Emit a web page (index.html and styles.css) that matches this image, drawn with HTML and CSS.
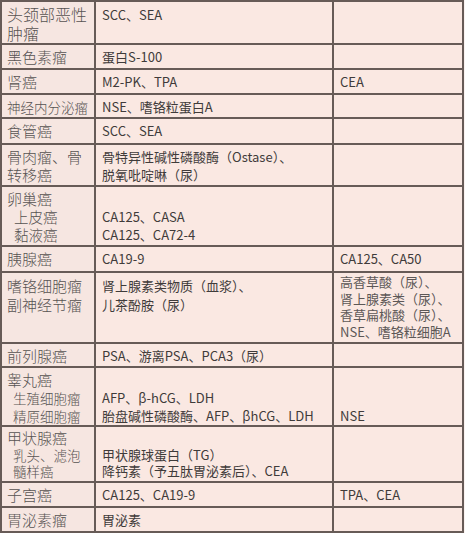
FILE: index.html
```html
<!DOCTYPE html>
<html lang="zh-CN">
<head>
<meta charset="utf-8">
<link rel="stylesheet" href="styles.css">
</head>
<body>
<table class="markers">
  <colgroup><col class="c1"><col class="c2"><col class="c3"></colgroup>
  <tbody>
    <tr class="h42 lh19"><td class="name big">头颈部恶性<br>肿瘤</td><td>SCC、SEA</td><td></td></tr>
    <tr class="h25"><td class="name">黑色素瘤</td><td>蛋白S-100</td><td></td></tr>
    <tr class="h25"><td class="name">肾癌</td><td>M2-PK、TPA</td><td>CEA</td></tr>
    <tr class="h24"><td class="name small">神经内分泌瘤</td><td>NSE、嗜铬粒蛋白A</td><td></td></tr>
    <tr class="h26"><td class="name">食管癌</td><td>SCC、SEA</td><td></td></tr>
    <tr class="h42"><td class="name">骨肉瘤、骨<br>转移癌</td><td>骨特异性碱性磷酸酶（Ostase）、<br>脱氧吡啶啉（尿）</td><td></td></tr>
    <tr class="h60"><td class="name">卵巢癌<span class="sub">上皮癌</span><span class="sub">黏液癌</span></td><td><br>CA125、CASA<br>CA125、CA72-4</td><td></td></tr>
    <tr class="h26"><td class="name">胰腺癌</td><td>CA19-9</td><td>CA125、CA50</td></tr>
    <tr class="h71 lh19"><td class="name">嗜铬细胞瘤<br>副神经节瘤</td><td>肾上腺素类物质（血浆）、<br>儿茶酚胺（尿）</td><td class="tight">高香草酸（尿）、<br>肾上腺素类（尿）、<br>香草扁桃酸（尿）、<br>NSE、嗜铬粒细胞A</td></tr>
    <tr class="h24"><td class="name">前列腺癌</td><td>PSA、游离PSA、PCA3（尿）</td><td></td></tr>
    <tr class="h57"><td class="name">睾丸癌<span class="sub sm">生殖细胞瘤</span><span class="sub sm">精原细胞瘤</span></td><td><br>AFP、β-hCG、LDH<br>胎盘碱性磷酸酶、AFP、βhCG、LDH</td><td><br><br>NSE</td></tr>
    <tr class="h56 lh16"><td class="name">甲状腺癌<span class="sub sm">乳头、滤泡</span><span class="sub sm">髓样癌</span></td><td><br>甲状腺球蛋白（TG）<br>降钙素（予五肽胃泌素后）、CEA</td><td></td></tr>
    <tr class="h25"><td class="name">子宫癌</td><td>CA125、CA19-9</td><td>TPA、CEA</td></tr>
    <tr class="h25"><td class="name">胃泌素瘤</td><td>胃泌素</td><td></td></tr>
  </tbody>
</table>
</body>
</html>
```

FILE: styles.css
```css
html, body {
  margin: 0;
  padding: 0;
  background: #fbf3f0;
}

.markers {
  border-collapse: collapse;
  table-layout: fixed;
  width: 462px;
  font-family: "Noto Sans CJK SC", "Noto Sans", sans-serif;
  font-size: 13px;
  line-height: 18px;
  color: #3f3b3a;
}

.c1 { width: 94px; }
.c2 { width: 238px; }
.c3 { width: 130px; }

.markers td {
  border: 2px solid #675b57;
  background: #fae8e2;
  vertical-align: top;
  padding: 3px 6px 0 6px;
  overflow: hidden;
  white-space: nowrap;
}

.markers td.name {
  background: #f6e6e1;
  font-size: 15px;
  color: #575352;
  font-weight: 300;
  padding-left: 5px;
}

.markers td.big { font-size: 16px; }
.markers td.small { font-size: 13.5px; }

.sub {
  display: block;
  padding-left: 7px;
  font-size: 14.5px;
}

.sub.sm {
  font-size: 13.5px;
  padding-left: 6px;
}

.lh19 td { line-height: 19px; }
.lh16 td { line-height: 16.5px; }
.markers td.tight {
  line-height: 16.5px;
  padding-top: 1px;
  color: #5c5756;
}

.h24 { height: 24px; }
.h25 { height: 25px; }
.h26 { height: 26px; }
.h42 { height: 42px; }
.h56 { height: 56px; }
.h57 { height: 57px; }
.h60 { height: 60px; }
.h71 { height: 71px; }
```
